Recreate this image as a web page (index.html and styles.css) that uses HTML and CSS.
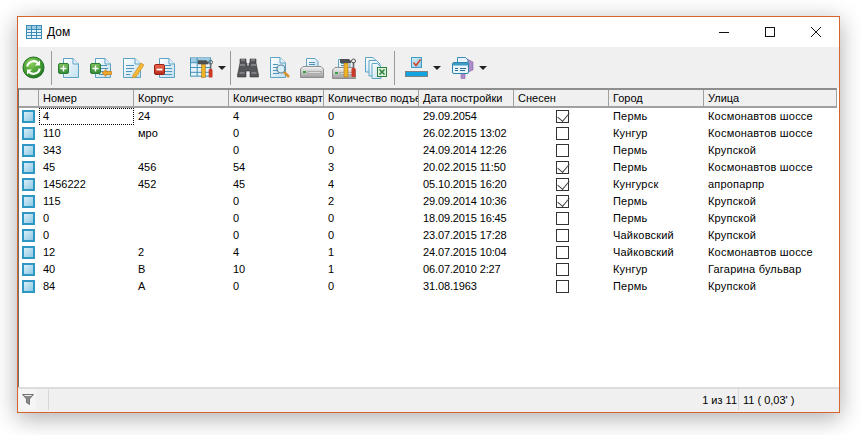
FILE: index.html
```html
<!DOCTYPE html>
<html lang="ru">
<head>
<meta charset="utf-8">
<title>Дом</title>
<link rel="stylesheet" href="styles.css">
</head>
<body>
<svg class="defs" width="0" height="0" aria-hidden="true">
  <defs>
    <linearGradient id="pg" x1="0" y1="0" x2="1" y2="1"><stop offset="0" stop-color="#fff"/><stop offset="1" stop-color="#bfdeee"/></linearGradient>
    <linearGradient id="gr" x1="0" y1="0" x2="0" y2="1"><stop offset="0" stop-color="#7cc25a"/><stop offset="1" stop-color="#2f8a34"/></linearGradient>
    <linearGradient id="rd" x1="0" y1="0" x2="0" y2="1"><stop offset="0" stop-color="#ef6a50"/><stop offset="1" stop-color="#b5281a"/></linearGradient>
    <radialGradient id="ball" cx=".4" cy=".3" r=".8"><stop offset="0" stop-color="#8fd05c"/><stop offset=".6" stop-color="#3f9a30"/><stop offset="1" stop-color="#17661c"/></radialGradient>
    <linearGradient id="sq" x1="0" y1="0" x2="1" y2="1"><stop offset="0" stop-color="#d8edf6"/><stop offset="1" stop-color="#8cc8e4"/></linearGradient>
    <linearGradient id="prn" x1="0" y1="0" x2="0" y2="1"><stop offset="0" stop-color="#f4f4f4"/><stop offset="1" stop-color="#9c9c9c"/></linearGradient>

    <symbol id="doc" viewBox="0 0 22 22">
      <path d="M5.500 1.500H15L20.500 7V20.500H5.500Z" fill="url(#pg)" stroke="#5fa3c4"/>
      <path d="M15 1.500V7H20.500" fill="#e4f2f9" stroke="#5fa3c4"/>
    </symbol>
    <symbol id="lines" viewBox="0 0 22 22">
      <path d="M9 8.500H17M9 11.500H18M9 14.500H18M9 17.500H18" stroke="#4f94bb" fill="none"/>
    </symbol>
    <symbol id="hammer" viewBox="0 0 16 20">
      <rect x="4" y="5" width="4" height="14" fill="#f0b429" stroke="#a8741a" stroke-width=".6"/>
      <path d="M0 1H9L11 3V5H0Z" fill="#4d4f52"/>
      <circle cx="13.500" cy="3" r="2" fill="none" stroke="#555"/>
      <rect x="12.700" y="4" width="1.600" height="6" fill="#666"/>
      <rect x="11.500" y="10" width="4" height="9" rx="1" fill="#c93b28"/>
    </symbol>
    <symbol id="printer" viewBox="0 0 24 20">
      <path d="M6.500 .5H15L18 3.500V10H6.500Z" fill="url(#pg)" stroke="#5fa3c4"/>
      <path d="M9 4.500H15M9 6.500H15" stroke="#4f94bb"/>
      <path d="M3 8.500H21L23.500 11V19.500H.5V11Z" fill="url(#prn)" stroke="#8d8d8d"/>
      <rect x="3" y="13" width="3" height="2" fill="#3aa043"/>
      <rect x="8" y="13.500" width="13" height="1.500" fill="#fff" stroke="#777" stroke-width=".5"/>
    </symbol>
  </defs>
</svg>

<div class="window">
  <header class="titlebar">
    <svg class="title-icon" width="16" height="14" viewBox="0 0 16 14">
      <rect x=".5" y=".5" width="15" height="13" fill="#e6f3fa" stroke="#3b8db5"/>
      <rect x="1" y="1" width="14" height="3" fill="#9ccbe3"/>
      <path d="M.5 4.500H15.500M.5 7.500H15.500M.5 10.500H15.500M5.500 .5V13.500M10.500 .5V13.500" stroke="#3b8db5" fill="none"/>
    </svg>
    <span class="title-text">Дом</span>
    <div class="win-controls">
      <svg width="10" height="10" viewBox="0 0 10 10"><path d="M0 5.500H10" stroke="#111"/></svg>
      <svg width="10" height="10" viewBox="0 0 10 10"><rect x=".5" y=".5" width="9" height="9" fill="none" stroke="#111"/></svg>
      <svg width="10" height="10" viewBox="0 0 10 10"><path d="M0 0L10 10M10 0L0 10" stroke="#111"/></svg>
    </div>
  </header>

  <div class="toolbar">
    <button class="tool tool-first" type="button">
      <svg width="23" height="23" viewBox="0 0 24 24">
        <circle cx="12" cy="12" r="11" fill="url(#ball)" stroke="#1c6b20"/>
        <path d="M5.500 11A6.700 6.700 0 0 1 17 7.500" fill="none" stroke="#fff" stroke-width="2.200"/>
        <path d="M18.800 4.500V10H13.500Z" fill="#fff"/>
        <path d="M18.500 13A6.700 6.700 0 0 1 7 16.500" fill="none" stroke="#fff" stroke-width="2.200"/>
        <path d="M5.200 19.500V14H10.500Z" fill="#fff"/>
      </svg>
    </button>
    <span class="sep"></span>
    <button class="tool" type="button">
      <svg width="22" height="22" viewBox="0 0 22 22">
        <use href="#doc"/>
        <rect x=".5" y="6.500" width="10" height="10" rx="1.500" fill="url(#gr)" stroke="#2c7a33"/>
        <path d="M5.500 8.500V14.500M2.500 11.500H8.500" stroke="#fff" stroke-width="1.500"/>
      </svg>
    </button>
    <button class="tool" type="button">
      <svg width="22" height="22" viewBox="0 0 22 22">
        <use href="#doc"/><use href="#lines"/>
        <rect x=".5" y="6.500" width="10" height="10" rx="1.500" fill="url(#gr)" stroke="#2c7a33"/>
        <path d="M5.500 8.500V14.500M2.500 11.500H8.500" stroke="#fff" stroke-width="1.500"/>
        <path d="M12 16L16 12.500V14.500H21.500V17.500H16V19.500Z" fill="#f1a62c" stroke="#c67b10" stroke-width=".7"/>
      </svg>
    </button>
    <button class="tool" type="button">
      <svg width="22" height="22" viewBox="0 0 22 22">
        <path d="M1.500 1.500H13L18.500 7V20.500H1.500Z" fill="url(#pg)" stroke="#5fa3c4"/>
        <path d="M13 1.500V7H18.500" fill="#e4f2f9" stroke="#5fa3c4"/>
        <path d="M4 8.500H12M4 11.500H12M4 14.500H10M4 17.500H8" stroke="#4f94bb" fill="none"/>
        <path d="M11 18L19 6L22 8L14 20L10.500 21Z" fill="#f3b936" stroke="#c98a1c" stroke-width=".6"/>
      </svg>
    </button>
    <button class="tool" type="button">
      <svg width="22" height="22" viewBox="0 0 22 22">
        <use href="#doc"/><use href="#lines"/>
        <rect x=".5" y="7.500" width="10" height="10" rx="1.500" fill="url(#rd)" stroke="#962214"/>
        <path d="M2.500 12.500H8.500" stroke="#fff" stroke-width="1.800"/>
      </svg>
    </button>
    <button class="tool tool-drop" type="button">
      <svg class="icon-wide" width="23" height="22" viewBox="0 0 24 22">
        <rect x=".5" y=".5" width="21" height="19" fill="#e6f3fa" stroke="#3b8db5"/>
        <rect x="1" y="1" width="20" height="4" fill="#9ccbe3"/>
        <path d="M.5 5.500H21.500M.5 10.500H21.500M.5 15.500H21.500M7.500 .5V19.500" stroke="#3b8db5" fill="none"/>
        <svg x="8" y="2" width="16" height="20" viewBox="0 0 16 20"><use href="#hammer"/></svg>
      </svg>
      <span class="caret"></span>
    </button>
    <span class="sep"></span>
    <button class="tool" type="button">
      <svg width="22" height="22" viewBox="0 0 22 22">
        <path d="M3 2H9V6H10V9H12V6H13V2H19V6L21.500 18V20H13V14H9V20H.5V18L3 6Z" fill="#55565a" stroke="#36373a" stroke-width=".6"/>
        <path d="M4 3H8M14 3H18M3 8H8M14 8H19M2.500 16H7.500M14.500 16H19.500" stroke="#a9abae" fill="none"/>
      </svg>
    </button>
    <button class="tool" type="button">
      <svg width="22" height="22" viewBox="0 0 22 22">
        <path d="M1.500 .5H11L16.500 6V20.500H1.500Z" fill="url(#pg)" stroke="#5fa3c4"/>
        <path d="M11 .5V6H16.500" fill="#e4f2f9" stroke="#5fa3c4"/>
        <path d="M4 7.500H9M4 10.500H8M4 13.500H8M4 16.500H10" stroke="#4f94bb" fill="none"/>
        <circle cx="12" cy="12" r="4" fill="#d6effb" stroke="#5e7f92" stroke-width="1.200"/>
        <path d="M15 15L20 20" stroke="#d7902a" stroke-width="2.500"/>
      </svg>
    </button>
    <button class="tool" type="button">
      <svg width="24" height="20" viewBox="0 0 24 20"><use href="#printer"/></svg>
    </button>
    <button class="tool" type="button">
      <svg width="24" height="22" viewBox="0 0 24 22">
        <svg y="2" width="24" height="20" viewBox="0 0 24 20"><use href="#printer"/></svg>
        <svg x="8" y="1" width="16" height="20" viewBox="0 0 16 20"><use href="#hammer"/></svg>
      </svg>
    </button>
    <button class="tool tool-last" type="button">
      <svg width="22" height="22" viewBox="0 0 22 22">
        <path d="M.5 .5H8L11 3.500V15H.5Z" fill="url(#pg)" stroke="#5fa3c4"/>
        <path d="M4 3.500H11.500L15 7V19H4Z" fill="url(#pg)" stroke="#5fa3c4"/>
        <path d="M7 6.500H12.500L16 10V21.500H7Z" fill="url(#pg)" stroke="#5fa3c4"/>
        <rect x="12.500" y="10.500" width="9" height="9" fill="#dcefdc" stroke="#2f7f3c"/>
        <path d="M14.500 12.500L19.500 17.500M19.500 12.500L14.500 17.500" stroke="#2f7f3c" stroke-width="1.500"/>
      </svg>
    </button>
    <span class="sep"></span>
    <button class="tool tool-drop tool-check" type="button">
      <svg class="icon-wide" width="23" height="22" viewBox="0 0 23 22">
        <rect x="6.500" y=".5" width="10" height="10" fill="url(#sq)" stroke="#3e9cc6"/>
        <path d="M8.500 5.500L11 8.500L15.500 2.500" fill="none" stroke="#d3452c" stroke-width="1.600"/>
        <rect x="1" y="15" width="21" height="4" fill="#11a4e0"/>
        <rect x=".5" y="14.500" width="22" height="5" fill="none" stroke="#111" stroke-dasharray="1 1"/>
      </svg>
      <span class="caret"></span>
    </button>
    <button class="tool tool-drop tool-card" type="button">
      <svg class="icon-wide" width="22" height="22" viewBox="0 0 22 22">
        <path d="M13 1L21 5V13L15 15.500L13 15.500V21.500H9V15Z" fill="#ad8ac8" stroke="#8b6aa8" stroke-width=".6"/>
        <path d="M5.500 .5H13.500L16 3V7H5.500Z" fill="#e8f4fa" stroke="#3b8db5"/>
        <rect x=".5" y="5.500" width="16" height="11" rx="1.500" fill="#e9f4fa" stroke="#2f86ad"/>
        <rect x="1" y="6" width="15" height="2.500" fill="#3c9cc6"/>
        <path d="M3 11.500H6M8 11.500H14M3 13.500H6M8 13.500H13" stroke="#2d6f91"/>
      </svg>
      <span class="caret"></span>
    </button>
  </div>

  <div class="grid">
    <div class="row head">
      <div class="corner"></div>
      <div class="hcell">Номер</div>
      <div class="hcell">Корпус</div>
      <div class="hcell">Количество квартир</div>
      <div class="hcell">Количество подъездов</div>
      <div class="hcell">Дата постройки</div>
      <div class="hcell">Снесен</div>
      <div class="hcell">Город</div>
      <div class="hcell">Улица</div>
    </div>
    <div class="row"><div class="rh"><i></i></div><div class="cell focus">4</div><div class="cell">24</div><div class="cell">4</div><div class="cell">0</div><div class="cell">29.09.2054</div><div class="cell chk"><span class="box on"></span></div><div class="cell">Пермь</div><div class="cell">Космонавтов шоссе</div></div>
    <div class="row"><div class="rh"><i></i></div><div class="cell">110</div><div class="cell">мро</div><div class="cell">0</div><div class="cell">0</div><div class="cell">26.02.2015 13:02</div><div class="cell chk"><span class="box"></span></div><div class="cell">Кунгур</div><div class="cell">Космонавтов шоссе</div></div>
    <div class="row"><div class="rh"><i></i></div><div class="cell">343</div><div class="cell"></div><div class="cell">0</div><div class="cell">0</div><div class="cell">24.09.2014 12:26</div><div class="cell chk"><span class="box"></span></div><div class="cell">Пермь</div><div class="cell">Крупской</div></div>
    <div class="row"><div class="rh"><i></i></div><div class="cell">45</div><div class="cell">456</div><div class="cell">54</div><div class="cell">3</div><div class="cell">20.02.2015 11:50</div><div class="cell chk"><span class="box on"></span></div><div class="cell">Пермь</div><div class="cell">Космонавтов шоссе</div></div>
    <div class="row"><div class="rh"><i></i></div><div class="cell">1456222</div><div class="cell">452</div><div class="cell">45</div><div class="cell">4</div><div class="cell">05.10.2015 16:20</div><div class="cell chk"><span class="box on"></span></div><div class="cell">Кунгурск</div><div class="cell">апропарпр</div></div>
    <div class="row"><div class="rh"><i></i></div><div class="cell">115</div><div class="cell"></div><div class="cell">0</div><div class="cell">2</div><div class="cell">29.09.2014 10:36</div><div class="cell chk"><span class="box on"></span></div><div class="cell">Пермь</div><div class="cell">Крупской</div></div>
    <div class="row"><div class="rh"><i></i></div><div class="cell">0</div><div class="cell"></div><div class="cell">0</div><div class="cell">0</div><div class="cell">18.09.2015 16:45</div><div class="cell chk"><span class="box"></span></div><div class="cell">Пермь</div><div class="cell">Крупской</div></div>
    <div class="row"><div class="rh"><i></i></div><div class="cell">0</div><div class="cell"></div><div class="cell">0</div><div class="cell">0</div><div class="cell">23.07.2015 17:28</div><div class="cell chk"><span class="box"></span></div><div class="cell">Чайковский</div><div class="cell">Крупской</div></div>
    <div class="row"><div class="rh"><i></i></div><div class="cell">12</div><div class="cell">2</div><div class="cell">4</div><div class="cell">1</div><div class="cell">24.07.2015 10:04</div><div class="cell chk"><span class="box"></span></div><div class="cell">Чайковский</div><div class="cell">Космонавтов шоссе</div></div>
    <div class="row"><div class="rh"><i></i></div><div class="cell">40</div><div class="cell">В</div><div class="cell">10</div><div class="cell">1</div><div class="cell">06.07.2010 2:27</div><div class="cell chk"><span class="box"></span></div><div class="cell">Кунгур</div><div class="cell">Гагарина бульвар</div></div>
    <div class="row"><div class="rh"><i></i></div><div class="cell">84</div><div class="cell">А</div><div class="cell">0</div><div class="cell">0</div><div class="cell">31.08.1963</div><div class="cell chk"><span class="box"></span></div><div class="cell">Пермь</div><div class="cell">Крупской</div></div>
  </div>

  <footer class="statusbar">
    <div class="st-filter">
      <svg width="12" height="11" viewBox="0 0 12 11"><path d="M.5 .5H11.500L7.500 5V10.500L4.500 8.500V5Z" fill="#8b8b8b" stroke="#555" stroke-width=".7"/><path d="M2.500 1.500H9.500" stroke="#eee"/></svg>
    </div>
    <div class="st-fill"></div>
    <div class="st-pos">1 из 11</div>
    <div class="st-total">11 ( 0,03' )</div>
  </footer>
</div>
</body>
</html>
```

FILE: styles.css
```css
* { box-sizing: border-box; }

html, body { height: 100%; }

body {
  margin: 0;
  padding: 16px 21px 22px 17px;
  background: #fff;
  font: 11px/13px "Liberation Sans", Arial, sans-serif;
  color: #000;
  overflow: hidden;
}

.defs { position: absolute; }

.window {
  width: 823px;
  height: 397px;
  display: flex;
  flex-direction: column;
  border: 1px solid #d4652b;
  background: #fff;
  box-shadow: 0 5px 22px rgba(0, 0, 0, .33);
}

.titlebar {
  height: 30px;
  flex: none;
  display: flex;
  align-items: center;
  padding-left: 8px;
  background: #fff;
}

.title-icon { flex: none; }

.title-text {
  margin-left: 5px;
  font-size: 12px;
}

.win-controls {
  margin-left: auto;
  display: flex;
  gap: 36px;
  padding-right: 18px;
}

.win-controls svg { display: block; }

.toolbar {
  height: 41px;
  flex: none;
  display: flex;
  align-items: center;
  background: #f0f0f0;
}

.tool {
  width: 32px;
  height: 34px;
  flex: none;
  display: flex;
  align-items: center;
  justify-content: center;
  border: 0;
  padding: 0;
  background: none;
}

.tool svg { display: block; }

.tool-first { padding-right: 2px; }

.tool-last { width: 33px; padding-right: 1px; }

.tool-drop {
  width: 48px;
  justify-content: flex-start;
  padding-left: 9px;
}

.tool-check { width: 56px; }

.tool-card { width: 46px; padding-left: 0; }

.caret {
  margin-left: 5px;
  width: 0;
  height: 0;
  border-style: solid;
  border-width: 4px 4px 0;
  border-color: #222 transparent transparent;
}

.sep {
  width: 1px;
  height: 34px;
  flex: none;
  background: #9a9a9a;
  margin: 0 1px;
}

.grid {
  flex: 1;
  min-height: 0;
  margin-right: 2px;
  border-top: 2px solid #8e8e8e;
  border-left: 1px solid #6f6f6f;
  background: #fff;
}

.row {
  display: grid;
  grid-template-columns: 20px repeat(7, 95px) 1fr;
  height: 17px;
}

.head {
  height: 18px;
  background: #f0f0f0;
  border-bottom: 2px solid #a0a0a0;
}

.corner,
.hcell {
  border-right: 1px solid #a0a0a0;
}

.hcell {
  padding: 2px 0 0 4px;
  white-space: nowrap;
  overflow: hidden;
}

.rh {
  padding: 2px 0 0 3px;
}

.rh i {
  display: block;
  width: 13px;
  height: 13px;
  background: linear-gradient(135deg, #d9eef7, #8ec9e5);
  border: 2px solid #2f97c4;
}

.cell {
  padding: 2px 0 0 4px;
  white-space: nowrap;
  overflow: hidden;
}

.cell:nth-child(6) { letter-spacing: -.13px; }

.cell:nth-child(8),
.cell:nth-child(9) { letter-spacing: .2px; }

.focus {
  padding-top: 1px;
  border: 1px dotted #000;
  padding-left: 3px;
}

.chk {
  padding: 2px 0 0 1px;
  display: flex;
  justify-content: center;
}

.box {
  width: 13px;
  height: 13px;
  border: 1px solid #333;
  background: #fff;
}

.box.on::after {
  content: "";
  display: block;
  width: 6px;
  height: 10px;
  margin: -1px 0 0 3px;
  border-right: 1px solid #444;
  border-bottom: 1px solid #444;
  transform: rotate(40deg);
}

.statusbar {
  height: 25px;
  flex: none;
  display: flex;
  background: #f0f0f0;
  border-top: 2px solid #dcdcdc;
  padding: 0 1px 2px 1px;
}

.st-filter {
  width: 17px;
  display: flex;
  align-items: center;
  justify-content: center;
  background: #f5f5f5;
}

.st-fill {
  flex: 1;
  margin-left: 12px;
  border-left: 1px solid #d8d8d8;
}

.st-pos {
  padding: 5px 1px 0 0;
  border-right: 1px solid #d8d8d8;
}

.st-total {
  width: 99px;
  padding: 5px 0 0 4px;
}
```
